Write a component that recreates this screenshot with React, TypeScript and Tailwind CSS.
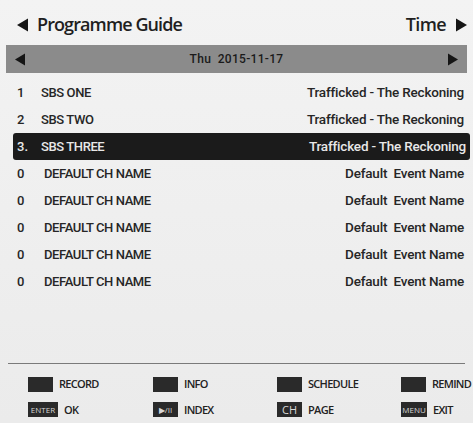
import React from 'react';

const channels = [
  { no: '1', name: 'SBS ONE', event: 'Trafficked - The Reckoning' },
  { no: '2', name: 'SBS TWO', event: 'Trafficked - The Reckoning' },
  { no: '3.', name: 'SBS THREE', event: 'Trafficked - The Reckoning', selected: true },
  { no: '0', name: 'DEFAULT CH NAME', event: 'Default  Event Name' },
  { no: '0', name: 'DEFAULT CH NAME', event: 'Default  Event Name' },
  { no: '0', name: 'DEFAULT CH NAME', event: 'Default  Event Name' },
  { no: '0', name: 'DEFAULT CH NAME', event: 'Default  Event Name' },
  { no: '0', name: 'DEFAULT CH NAME', event: 'Default  Event Name' },
];

function Tri({ dir, className }: { dir: 'l' | 'r'; className: string }) {
  return (
    <svg viewBox="0 0 10 12" className={className}>
      <path d={dir === 'l' ? 'M10 0 L0 6 L10 12 Z' : 'M0 0 L10 6 L0 12 Z'} fill="#151515" />
    </svg>
  );
}

function Key({ label, children, w = 'w-[25px]' }: { label: string; children?: React.ReactNode; w?: string }) {
  return (
    <div className="flex items-center">
      <div className={`${w} h-[15px] bg-[#2a2a2a] flex items-center justify-center text-[8px] text-[#d8d8d8] leading-none`}>
        {children}
      </div>
      <span className="ml-[6px] text-[11px] font-semibold text-[#222] tracking-[-0.7px]">{label}</span>
    </div>
  );
}

export default function App() {
  return (
    <div className="w-[473px] h-[423px] bg-gradient-to-b from-[#f3f3f3] to-[#ebebeb] flex flex-col" style={{ fontFamily: 'Roboto, sans-serif' }}>
      <div className="h-[45px] flex items-center justify-between pl-[17px] pr-[6px] pt-[4px]" style={{ fontFamily: '"Open Sans", sans-serif' }}>
        <div className="flex items-center">
          <Tri dir="l" className="w-[11px] h-[14px]" />
          <span className="ml-[9px] text-[18px] font-semibold text-[#1f1f1f] tracking-[-0.9px]">Programme Guide</span>
        </div>
        <div className="flex items-center">
          <span className="text-[18px] font-semibold text-[#1f1f1f] tracking-[-0.6px]">Time</span>
          <Tri dir="r" className="ml-[10px] w-[11px] h-[14px]" />
        </div>
      </div>
      <div className="mx-[6px] h-[28px] bg-[#8b8b8b] flex items-center justify-between px-[9px]">
        <Tri dir="l" className="w-[10px] h-[13px]" />
        <span className="text-[12px] font-medium text-[#1a1a1a] tracking-[0.3px]">Thu&nbsp;&nbsp;2015-11-17</span>
        <Tri dir="r" className="w-[10px] h-[13px]" />
      </div>
      <div className="flex flex-col pt-[6px]">
        {channels.map((c, i) => (
          <div
            key={i}
            className={`h-[27px] flex items-center ${c.selected ? 'ml-[13px] mr-[3px] rounded-[3px] bg-[#1b1b1b] text-[#e8e8e8] pl-[4px] pr-[4px]' : 'pl-[17px] pr-[9px] text-[#262626]'}`}
          >
            <span className={`${c.no === '0' ? 'w-[27px]' : 'w-[24px]'} text-[13px] font-medium`}>{c.no}</span>
            <span className="text-[13px] font-medium tracking-[-0.4px]">{c.name}</span>
            <span className="ml-auto text-[13.5px] font-medium tracking-[-0.2px] whitespace-pre">{c.event}</span>
          </div>
        ))}
      </div>
      <div className="mt-auto mx-[8px] border-t border-[#7a7a7a]" />
      <div className="grid grid-cols-[125px_124px_124px_1fr] pl-[28px] pt-[12px] pb-[5px] gap-y-[9px]" style={{ fontFamily: '"Open Sans", sans-serif' }}>
        <Key label="RECORD" />
        <Key label="INFO" />
        <Key label="SCHEDULE" />
        <Key label="REMIND" />
        <Key label="OK" w="w-[30px]">ENTER</Key>
        <Key label="INDEX">▶/II</Key>
        <Key label="PAGE"><span className="text-[11px]">CH</span></Key>
        <Key label="EXIT" w="w-[26px]">MENU</Key>
      </div>
    </div>
  );
}
